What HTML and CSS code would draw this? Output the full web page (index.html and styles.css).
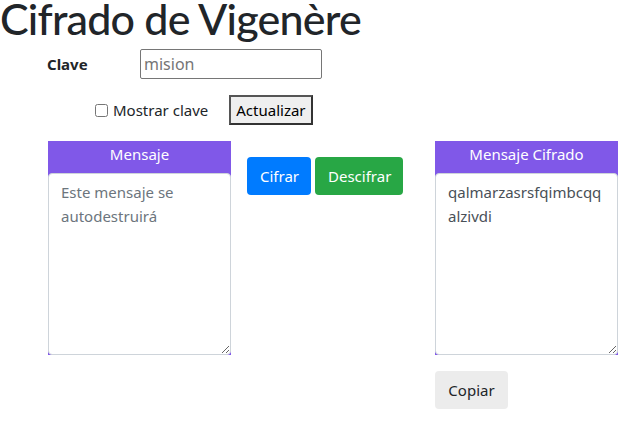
FILE: index.html
```html
<!DOCTYPE html>
<html lang="es">
<head>
<meta charset="utf-8">
<title>Cifrado de Vigenère</title>
<link rel="stylesheet" href="styles.css">
</head>
<body>
<h1 class="title">Cifrado de Vigenère</h1>
<div class="key-row">
  <label class="key-label" for="clave">Clave</label>
  <input class="key-input" id="clave" type="password" placeholder="mision">
</div>
<div class="opts-row">
  <label class="show-key"><input type="checkbox" class="chk"> Mostrar clave</label>
  <button class="btn-update" type="button">Actualizar</button>
</div>
<div class="work-row">
  <div class="panel">
    <div class="panel-head">Mensaje</div>
    <textarea class="panel-text" placeholder="Este mensaje se autodestruirá"></textarea>
  </div>
  <div class="actions">
    <button class="btn btn-blue" type="button">Cifrar</button>
    <button class="btn btn-green" type="button">Descifrar</button>
  </div>
  <div class="right-col">
    <div class="panel">
      <div class="panel-head">Mensaje Cifrado</div>
      <textarea class="panel-text" readonly>qalmarzasrsfqimbcqqalzivdi</textarea>
    </div>
    <button class="btn btn-light" type="button">Copiar</button>
  </div>
</div>
</body>
</html>
```
FILE: styles.css
```css
html, body {
  margin: 0;
  padding: 0;
  background: #fff;
}
body {
  font-family: "Noto Sans", "Open Sans", sans-serif;
  font-size: 16px;
  color: #212529;
}
.title {
  margin: 0;
  font-family: Lato, "Noto Sans", sans-serif;
  font-size: 43px;
  font-weight: 500;
  letter-spacing: -0.8px;
  line-height: 38px;
  height: 38px;
  color: #212529;
  white-space: nowrap;
}
.key-row {
  display: flex;
  align-items: center;
  padding-left: 47px;
  margin-top: 11px;
  height: 30px;
}
.key-label {
  width: 93px;
  font-weight: 700;
  font-size: 15px;
}
.key-input {
  box-sizing: border-box;
  width: 182px;
  height: 30px;
  margin: 0;
  padding: 1px 3px;
  border: 1px solid #767676;
  border-radius: 2px;
  font-family: inherit;
  font-size: 16px;
}
.key-input::placeholder {
  color: #757575;
}
.opts-row {
  display: flex;
  align-items: center;
  padding-left: 94px;
  margin-top: 16px;
  height: 30px;
}
.show-key {
  display: flex;
  align-items: center;
  font-size: 15px;
  margin-right: 21px;
}
.chk {
  margin: 0 5px 0 1px;
  width: 13px;
  height: 13px;
}
.btn-update {
  box-sizing: border-box;
  height: 30px;
  margin: 0;
  padding: 0 5px;
  font-family: inherit;
  font-size: 15px;
  color: #000;
  background: #efefef;
  border: 2px solid #333;
  border-top-color: #555;
  border-left-color: #555;
}
.work-row {
  box-sizing: border-box;
  width: 618px;
  display: flex;
  align-items: flex-start;
  padding-left: 48px;
  margin-top: 16px;
}
.panel {
  width: 183px;
  background: #8058e8;
  display: flex;
  flex-direction: column;
}
.panel-head {
  height: 32px;
  line-height: 26px;
  text-align: center;
  color: #fff;
  font-size: 15px;
}
.panel-text {
  box-sizing: border-box;
  display: block;
  width: 183px;
  height: 182px;
  margin: 0;
  padding: 6px 12px;
  border: 1px solid #ced4da;
  border-radius: 4px;
  background: #fff;
  font-family: inherit;
  font-size: 15px;
  line-height: 24px;
  color: #495057;
  resize: vertical;
  overflow-wrap: break-word;
}
.panel-text::placeholder {
  color: #6c757d;
}
.actions {
  display: flex;
  gap: 4px;
  margin-left: 16px;
  margin-top: 16px;
}
.btn {
  box-sizing: border-box;
  height: 38px;
  padding: 6px 12px;
  border: 1px solid transparent;
  border-radius: 4px;
  font-family: inherit;
  font-size: 15px;
  line-height: 24px;
  cursor: pointer;
}
.btn-blue {
  background: #007bff;
  color: #fff;
  width: 64px;
}
.btn-green {
  background: #28a745;
  color: #fff;
  width: 88px;
}
.btn-light {
  background: #ececec;
  color: #212529;
  margin-top: 16px;
  align-self: flex-start;
  width: 73px;
}
.right-col {
  margin-left: auto;
  display: flex;
  flex-direction: column;
}
```
